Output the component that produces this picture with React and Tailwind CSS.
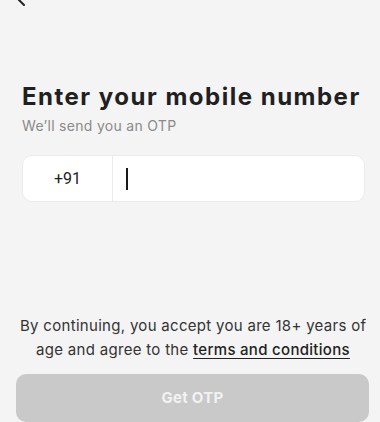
import React from "react";

export default function App() {
  return (
    <div
      className="h-[422px] w-[380px] overflow-hidden bg-[#f4f4f4] flex flex-col"
      style={{ fontFamily: "Inter, 'Noto Sans', sans-serif" }}
    >
      <div className="h-[6px] pl-[16px]">
        <svg width="12" height="6" viewBox="0 0 12 6" className="block">
          <path d="M1 -2 L8 5" stroke="#222" strokeWidth="2" fill="none" strokeLinecap="round" />
        </svg>
      </div>
      <div className="pl-[22px] pr-[15px] mt-[75px]">
        <h1 className="text-[24px] leading-[32px] font-bold text-[#202020] tracking-[1.5px] whitespace-nowrap">
          Enter your mobile number
        </h1>
        <p className="mt-[3px] text-[14px] leading-[20px] text-[#8a8a8a] tracking-[0.3px]">
          We’ll send you an OTP
        </p>
        <div className="mt-[19px] h-[47px] w-[343px] flex items-stretch bg-white rounded-[10px] border border-[#ebebeb]">
          <div
            className="w-[90px] flex items-center justify-center text-[16px] text-[#222] border-r border-[#ebebeb]"
            style={{ fontFamily: "Roboto, Arial, sans-serif" }}
          >
            +91
          </div>
          <div className="flex items-center pl-[13px]">
            <div className="w-[2px] h-[22px] bg-[#1a1a1a]" />
          </div>
        </div>
      </div>
      <div className="flex-1" />
      <p className="pl-[20px] pr-[14px] text-center text-[15px] leading-[24px] text-[#333] tracking-[0.3px] whitespace-nowrap">
        By continuing, you accept you are 18+ years of
        <br />
        age and agree to the{" "}
        <span className="font-medium text-[#222] underline underline-offset-[3px] decoration-[1px]">
          terms and conditions
        </span>
      </p>
      <div className="mt-[12px] pl-[16px] pr-[11px]">
        <button className="w-full h-[48px] rounded-[10px] bg-[#c9c9c9] text-[#f2f2f2] text-[15px] font-bold tracking-[0.3px]">
          Get OTP
        </button>
      </div>
    </div>
  );
}
